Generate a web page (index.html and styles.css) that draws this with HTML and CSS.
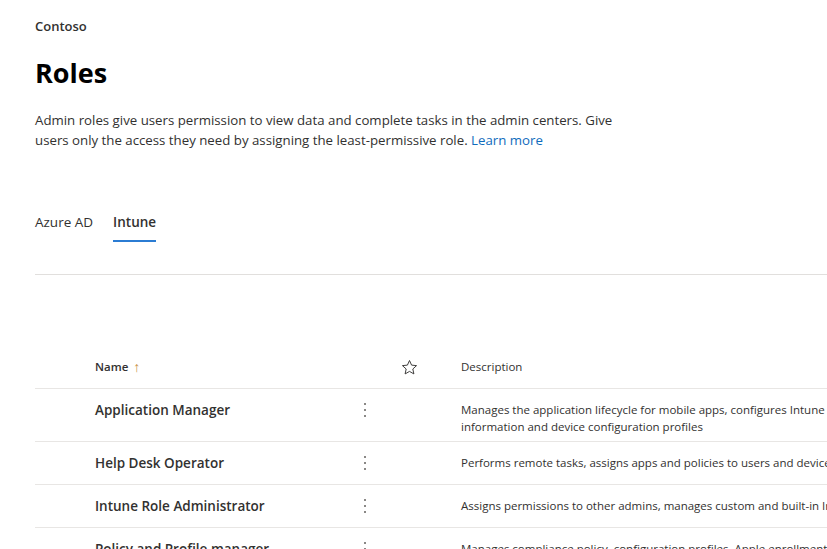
FILE: index.html
```html
<!DOCTYPE html>
<html lang="en">
<head>
<meta charset="utf-8">
<title>Roles</title>
<link rel="stylesheet" href="styles.css">
</head>
<body>
<main class="page">
  <div class="org">Contoso</div>
  <h1 class="title">Roles</h1>
  <p class="intro">Admin roles give users permission to view data and complete tasks in the admin centers. Give users only the access they need by assigning the least-permissive role. <a class="link" href="#">Learn more</a></p>

  <nav class="tabs">
    <span class="tab">Azure AD</span>
    <span class="tab active">Intune</span>
  </nav>
  <div class="divider"></div>

  <div class="table">
    <div class="row head">
      <div class="c-pad"></div>
      <div class="c-name head-name">Name <span class="sort">↑</span></div>
      <div class="c-more"></div>
      <div class="c-star">
        <svg width="17" height="17" viewBox="0 0 20 20"><path d="M10 1.8l2.45 5.4 5.85.6-4.4 3.95 1.25 5.8L10 14.6l-5.15 2.95 1.25-5.8L1.7 7.8l5.85-.6z" fill="none" stroke="#323130" stroke-width="1.1" stroke-linejoin="round"/></svg>
      </div>
      <div class="c-desc head-desc">Description</div>
    </div>
    <div class="row tall">
      <div class="c-pad"></div>
      <div class="c-name">Application Manager</div>
      <div class="c-more"><span class="dots"><i></i><i></i><i></i></span></div>
      <div class="c-star"></div>
      <div class="c-desc">Manages the application lifecycle for mobile apps, configures Intune protection policies,<br>information and device configuration profiles</div>
    </div>
    <div class="row">
      <div class="c-pad"></div>
      <div class="c-name">Help Desk Operator</div>
      <div class="c-more"><span class="dots"><i></i><i></i><i></i></span></div>
      <div class="c-star"></div>
      <div class="c-desc">Performs remote tasks, assigns apps and policies to users and devices, and views device information</div>
    </div>
    <div class="row">
      <div class="c-pad"></div>
      <div class="c-name">Intune Role Administrator</div>
      <div class="c-more"><span class="dots"><i></i><i></i><i></i></span></div>
      <div class="c-star"></div>
      <div class="c-desc">Assigns permissions to other admins, manages custom and built-in Intune roles</div>
    </div>
    <div class="row">
      <div class="c-pad"></div>
      <div class="c-name">Policy and Profile manager</div>
      <div class="c-more"><span class="dots"><i></i><i></i><i></i></span></div>
      <div class="c-star"></div>
      <div class="c-desc">Manages compliance policy, configuration profiles, Apple enrollment and corporate device identifiers</div>
    </div>
  </div>
</main>
</body>
</html>
```

FILE: styles.css
```css
html, body {
  margin: 0;
  padding: 0;
  background: #ffffff;
  overflow: hidden;
}
body {
  font-family: "Open Sans", "Noto Sans", "Liberation Sans", sans-serif;
  color: #323130;
  width: 827px;
  height: 549px;
}
.page {
  padding: 17px 0 0 35px;
}
.org {
  font-size: 13px;
  font-weight: 600;
  line-height: 18px;
  color: #323130;
}
.title {
  margin: 20px 0 0;
  font-size: 27px;
  font-weight: 700;
  line-height: 36px;
  color: #000000;
}
.intro {
  margin: 19px 0 0;
  width: 600px;
  font-size: 13.25px;
  line-height: 20px;
  color: #323130;
}
.link {
  color: #0f6cbd;
  text-decoration: none;
}
.tabs {
  margin-top: 62px;
  display: flex;
  gap: 20px;
}
.tab {
  font-size: 13.5px;
  line-height: 20px;
  padding-bottom: 8px;
  border-bottom: 2px solid transparent;
}
.tab.active {
  font-weight: 600;
  border-bottom-color: #2b7cd3;
}
.divider {
  margin-top: 32px;
  height: 1px;
  background: #e1dfdd;
  width: 900px;
}
.table {
  margin-top: 71px;
  width: 1000px;
}
.row {
  display: flex;
  align-items: center;
  height: 42px;
  border-bottom: 1px solid #e8e6e4;
}
.row.tall {
  align-items: flex-start;
  padding-top: 11px;
  box-sizing: border-box;
  height: 53px;
}
.row.tall .c-more {
  height: 20px;
  align-items: center;
}
.row.tall .c-desc {
  margin-top: 1px;
  line-height: 17px;
}
.c-pad { width: 60px; flex: none; }
.c-name {
  width: 255px;
  flex: none;
  font-size: 13.5px;
  font-weight: 600;
  color: #323130;
  line-height: 20px;
}
.head-name {
  font-size: 11.5px;
  font-weight: 600;
  color: #323130;
  display: flex;
  align-items: center;
  gap: 5px;
}
.sort {
  color: #c8914a;
  font-weight: 400;
  font-size: 14px;
}
.c-more {
  width: 30px;
  flex: none;
  display: flex;
  justify-content: center;
}
.dots {
  display: flex;
  flex-direction: column;
  gap: 4px;
}
.dots i {
  display: block;
  width: 2px;
  height: 2px;
  background: #8a8886;
}
.c-star {
  width: 58px;
  flex: none;
  display: flex;
  justify-content: center;
}
.c-star svg { display: block; }
.c-desc {
  margin-left: 23px;
  width: 620px;
  flex: none;
  font-size: 11.5px;
  line-height: 16px;
  color: #323130;
  white-space: nowrap;
}
.head-desc {
  font-size: 11.5px;
}
```
